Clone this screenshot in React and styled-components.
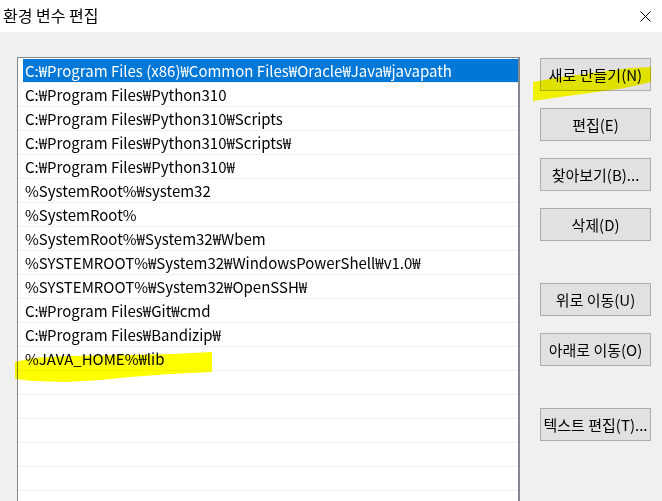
import React from "react";
import styled, { createGlobalStyle } from "styled-components";

const GlobalStyle = createGlobalStyle`
  html, body {
    margin: 0;
    padding: 0;
    overflow: hidden;
  }
  body {
    font-family: "Noto Sans CJK KR", "Noto Sans", sans-serif;
    color: #000;
  }
`;

const Window = styled.div`
  position: relative;
  width: 662px;
  height: 501px;
  display: flex;
  flex-direction: column;
  background: #f0f0f0;
  overflow: hidden;
`;

const TitleBar = styled.div`
  height: 32px;
  flex: none;
  background: #fff;
  display: flex;
  align-items: center;
  justify-content: space-between;
  padding: 0 11px 2px 3px;
  box-sizing: border-box;
`;

const Title = styled.span`
  font-size: 16px;
  line-height: 1;
`;

const CloseIcon = styled.svg`
  width: 11px;
  height: 11px;
  margin-top: 2px;
`;

const Body = styled.div`
  flex: 1;
  display: flex;
  gap: 20px;
  padding: 25px 0 0 17px;
  min-height: 0;
`;

const ListBox = styled.div`
  width: 503px;
  flex: none;
  box-sizing: border-box;
  background: #fff;
  border: 1px solid #828790;
  border-right-width: 2px;
  border-bottom: none;
  padding: 1px 0 0 1px;
  overflow: hidden;
`;

const Row = styled.div`
  height: 24px;
  box-sizing: border-box;
  border-bottom: 1px solid #f0f0f0;
  padding-left: ${(p) => (p.$selected ? "4px" : "0")};
  display: flex;
`;

const Cell = styled.div`
  flex: 1;
  display: flex;
  align-items: center;
  padding-left: ${(p) => (p.$selected ? "2px" : "6px")};
  font-size: 15px;
  white-space: nowrap;
  background: ${(p) => (p.$selected ? "#0078d7" : "transparent")};
  color: ${(p) => (p.$selected ? "#fff" : "#000")};
`;

const ButtonColumn = styled.div`
  display: flex;
  flex-direction: column;
  gap: 17px;
  padding-top: 1px;
`;

const Button = styled.button`
  width: 111px;
  height: 33px;
  margin-top: ${(p) => (p.$spaced ? "25px" : "0")};
  background: #e1e1e1;
  border: 1px solid #adadad;
  border-radius: 0;
  font-family: "Noto Sans CJK KR", "Noto Sans", sans-serif;
  font-size: 15px;
  color: #000;
  padding: 0;
  white-space: nowrap;
`;

const Marker = styled.svg`
  position: absolute;
  left: 0;
  top: 0;
  width: 662px;
  height: 501px;
  mix-blend-mode: multiply;
  pointer-events: none;
`;

const paths = [
  "C:₩Program Files (x86)₩Common Files₩Oracle₩Java₩javapath",
  "C:₩Program Files₩Python310",
  "C:₩Program Files₩Python310₩Scripts",
  "C:₩Program Files₩Python310₩Scripts₩",
  "C:₩Program Files₩Python310₩",
  "%SystemRoot%₩system32",
  "%SystemRoot%",
  "%SystemRoot%₩System32₩Wbem",
  "%SYSTEMROOT%₩System32₩WindowsPowerShell₩v1.0₩",
  "%SYSTEMROOT%₩System32₩OpenSSH₩",
  "C:₩Program Files₩Git₩cmd",
  "C:₩Program Files₩Bandizip₩",
  "%JAVA_HOME%₩lib",
  "",
  "",
  "",
  "",
  "",
  "",
];

const buttons = [
  { label: "새로 만들기(N)" },
  { label: "편집(E)" },
  { label: "찾아보기(B)..." },
  { label: "삭제(D)" },
  { label: "위로 이동(U)", spaced: true },
  { label: "아래로 이동(O)" },
  { label: "텍스트 편집(T)...", spaced: true },
];

export default function App() {
  return (
    <Window>
      <GlobalStyle />
      <TitleBar>
        <Title>환경 변수 편집</Title>
        <CloseIcon viewBox="0 0 11 11">
          <path d="M0.5 0.5 L10.5 10.5 M10.5 0.5 L0.5 10.5" stroke="#000" strokeWidth="1" />
        </CloseIcon>
      </TitleBar>
      <Body>
        <ListBox>
          {paths.map((p, i) => (
            <Row key={i} $selected={i === 0}>
              <Cell $selected={i === 0}>{p}</Cell>
            </Row>
          ))}
        </ListBox>
        <ButtonColumn>
          {buttons.map((b) => (
            <Button key={b.label} $spaced={b.spaced}>
              {b.label}
            </Button>
          ))}
        </ButtonColumn>
      </Body>
      <Marker viewBox="0 0 662 501">
        <path
          d="M533 82 L560 77 L600 72 L630 68 L651 67 L651 82 L625 88 L590 93 L560 97 L533 101 Z"
          fill="#ffff00"
        />
        <path
          d="M15 362 L33 358 L67 356 L133 355 L173 354 L212 352 L212 372 L170 374 L130 377 L100 380 L67 382 L33 381 L15 379 Z"
          fill="#ffff00"
        />
      </Marker>
    </Window>
  );
}
